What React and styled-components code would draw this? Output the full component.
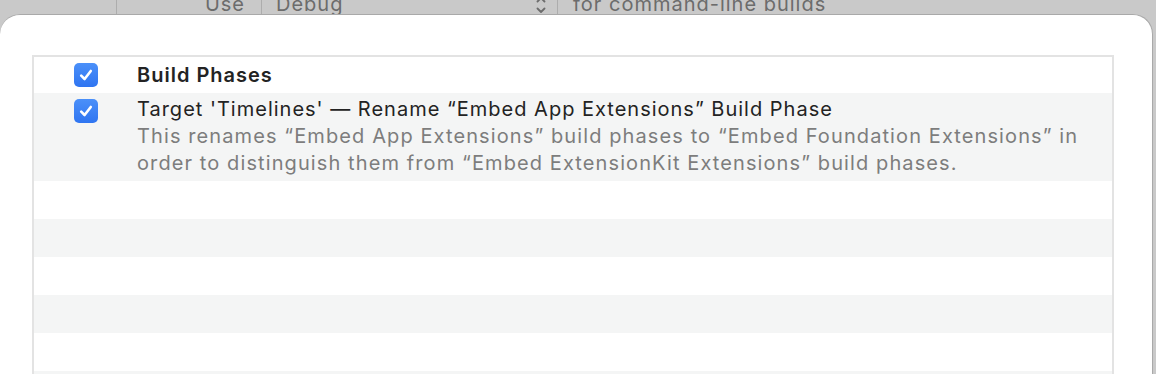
import React from "react";
import styled, { createGlobalStyle } from "styled-components";

const Global = createGlobalStyle`
  html, body { margin: 0; padding: 0; }
  body {
    background: #c9c9c9;
    font-family: Inter, "Noto Sans", "Liberation Sans", sans-serif;
    overflow: hidden;
    width: 1156px;
    height: 374px;
  }
`;

const Screen = styled.div`
  width: 1156px;
  height: 374px;
  overflow: hidden;
  display: flex;
  flex-direction: column;
`;

const Strip = styled.div`
  height: 14px;
  flex: none;
  overflow: hidden;
  display: flex;
  align-items: stretch;
  color: #6c6c6c;
  font-size: 20px;
  letter-spacing: 1px;
`;

const StripCell = styled.div`
  flex: none;
  width: ${(p) => p.$w}px;
  display: flex;
  justify-content: ${(p) => (p.$end ? "flex-end" : "space-between")};
  align-items: flex-start;
  padding: ${(p) => p.$pad || "0"};
  box-sizing: border-box;
`;

const StripText = styled.span`
  line-height: 20px;
  margin-top: -6px;
  white-space: nowrap;
`;

const StripDivider = styled.div`
  flex: none;
  width: 1px;
  background: #adadad;
`;

const Chevron = styled.svg`
  margin-top: -4px;
  flex: none;
`;

const Sheet = styled.div`
  flex: 1;
  width: 1153px;
  background: #ffffff;
  border-radius: 20px 20px 0 0;
  border: 1px solid #a9a9a9;
  border-bottom: none;
  border-left: none;
  box-sizing: border-box;
  padding: 40px 0 0 32px;
  overflow: hidden;
`;

const Table = styled.div`
  width: 1082px;
  box-sizing: border-box;
  border: 2px solid #e3e3e3;
  border-bottom: none;
  display: flex;
  flex-direction: column;
`;

const Row = styled.div`
  display: flex;
  align-items: ${(p) => (p.$top ? "flex-start" : "center")};
  background: ${(p) => (p.$alt ? "#f4f5f5" : "#ffffff")};
  min-height: ${(p) => p.$h}px;
  box-sizing: border-box;
  padding: ${(p) => (p.$top ? "3px 0 4px" : "0")};
`;

const CheckCell = styled.div`
  flex: none;
  width: 103px;
  display: flex;
  padding-left: 40px;
  box-sizing: border-box;
  margin-top: ${(p) => (p.$top ? "3px" : "0")};
`;

const Box = styled.div`
  width: 24px;
  height: 24px;
  border-radius: 5px;
  background: linear-gradient(#4b90f9, #2f75f1);
  display: flex;
  align-items: center;
  justify-content: center;
`;

const Content = styled.div`
  display: flex;
  flex-direction: column;
  font-size: 20px;
  line-height: 27px;
  letter-spacing: 1px;
`;

const Title = styled.div`
  color: #232323;
  font-weight: ${(p) => (p.$bold ? 600 : 400)};
  white-space: nowrap;
`;

const Desc = styled.div`
  color: #7d7d7d;
  white-space: nowrap;
  letter-spacing: 1.1px;
`;

const Check = () => (
  <Box>
    <svg width="16" height="16" viewBox="0 0 16 16">
      <path d="M3.2 8.6 L6.6 12 L12.8 4" fill="none" stroke="#fff" strokeWidth="2.6" strokeLinecap="round" strokeLinejoin="round" />
    </svg>
  </Box>
);

export default function App() {
  const empty = [0, 1, 2, 3, 4, 5];
  return (
    <Screen>
      <Global />
      <Strip>
        <StripCell $w={116} />
        <StripDivider />
        <StripCell $w={144} $end $pad="0 16px 0 0">
          <StripText>Use</StripText>
        </StripCell>
        <StripDivider />
        <StripCell $w={295} $pad="0 10px 0 14px">
          <StripText>Debug</StripText>
          <Chevron width="12" height="18" viewBox="0 0 12 18">
            <path d="M2.5 5.5 L6 2 L9.5 5.5 M2.5 12.5 L6 16 L9.5 12.5" fill="none" stroke="#6c6c6c" strokeWidth="1.8" strokeLinecap="round" strokeLinejoin="round" />
          </Chevron>
        </StripCell>
        <StripDivider />
        <StripCell $w={500} $pad="0 0 0 15px">
          <StripText>for command-line builds</StripText>
        </StripCell>
      </Strip>
      <Sheet>
        <Table>
          <Row $h={36}>
            <CheckCell>
              <Check />
            </CheckCell>
            <Content>
              <Title $bold>Build Phases</Title>
            </Content>
          </Row>
          <Row $alt $top $h={88}>
            <CheckCell $top>
              <Check />
            </CheckCell>
            <Content>
              <Title>Target 'Timelines' — Rename “Embed App Extensions” Build Phase</Title>
              <Desc>This renames “Embed App Extensions” build phases to “Embed Foundation Extensions” in</Desc>
              <Desc>order to distinguish them from “Embed ExtensionKit Extensions” build phases.</Desc>
            </Content>
          </Row>
          {empty.map((i) => (
            <Row key={i} $alt={i % 2 === 1} $h={38} />
          ))}
        </Table>
      </Sheet>
    </Screen>
  );
}
